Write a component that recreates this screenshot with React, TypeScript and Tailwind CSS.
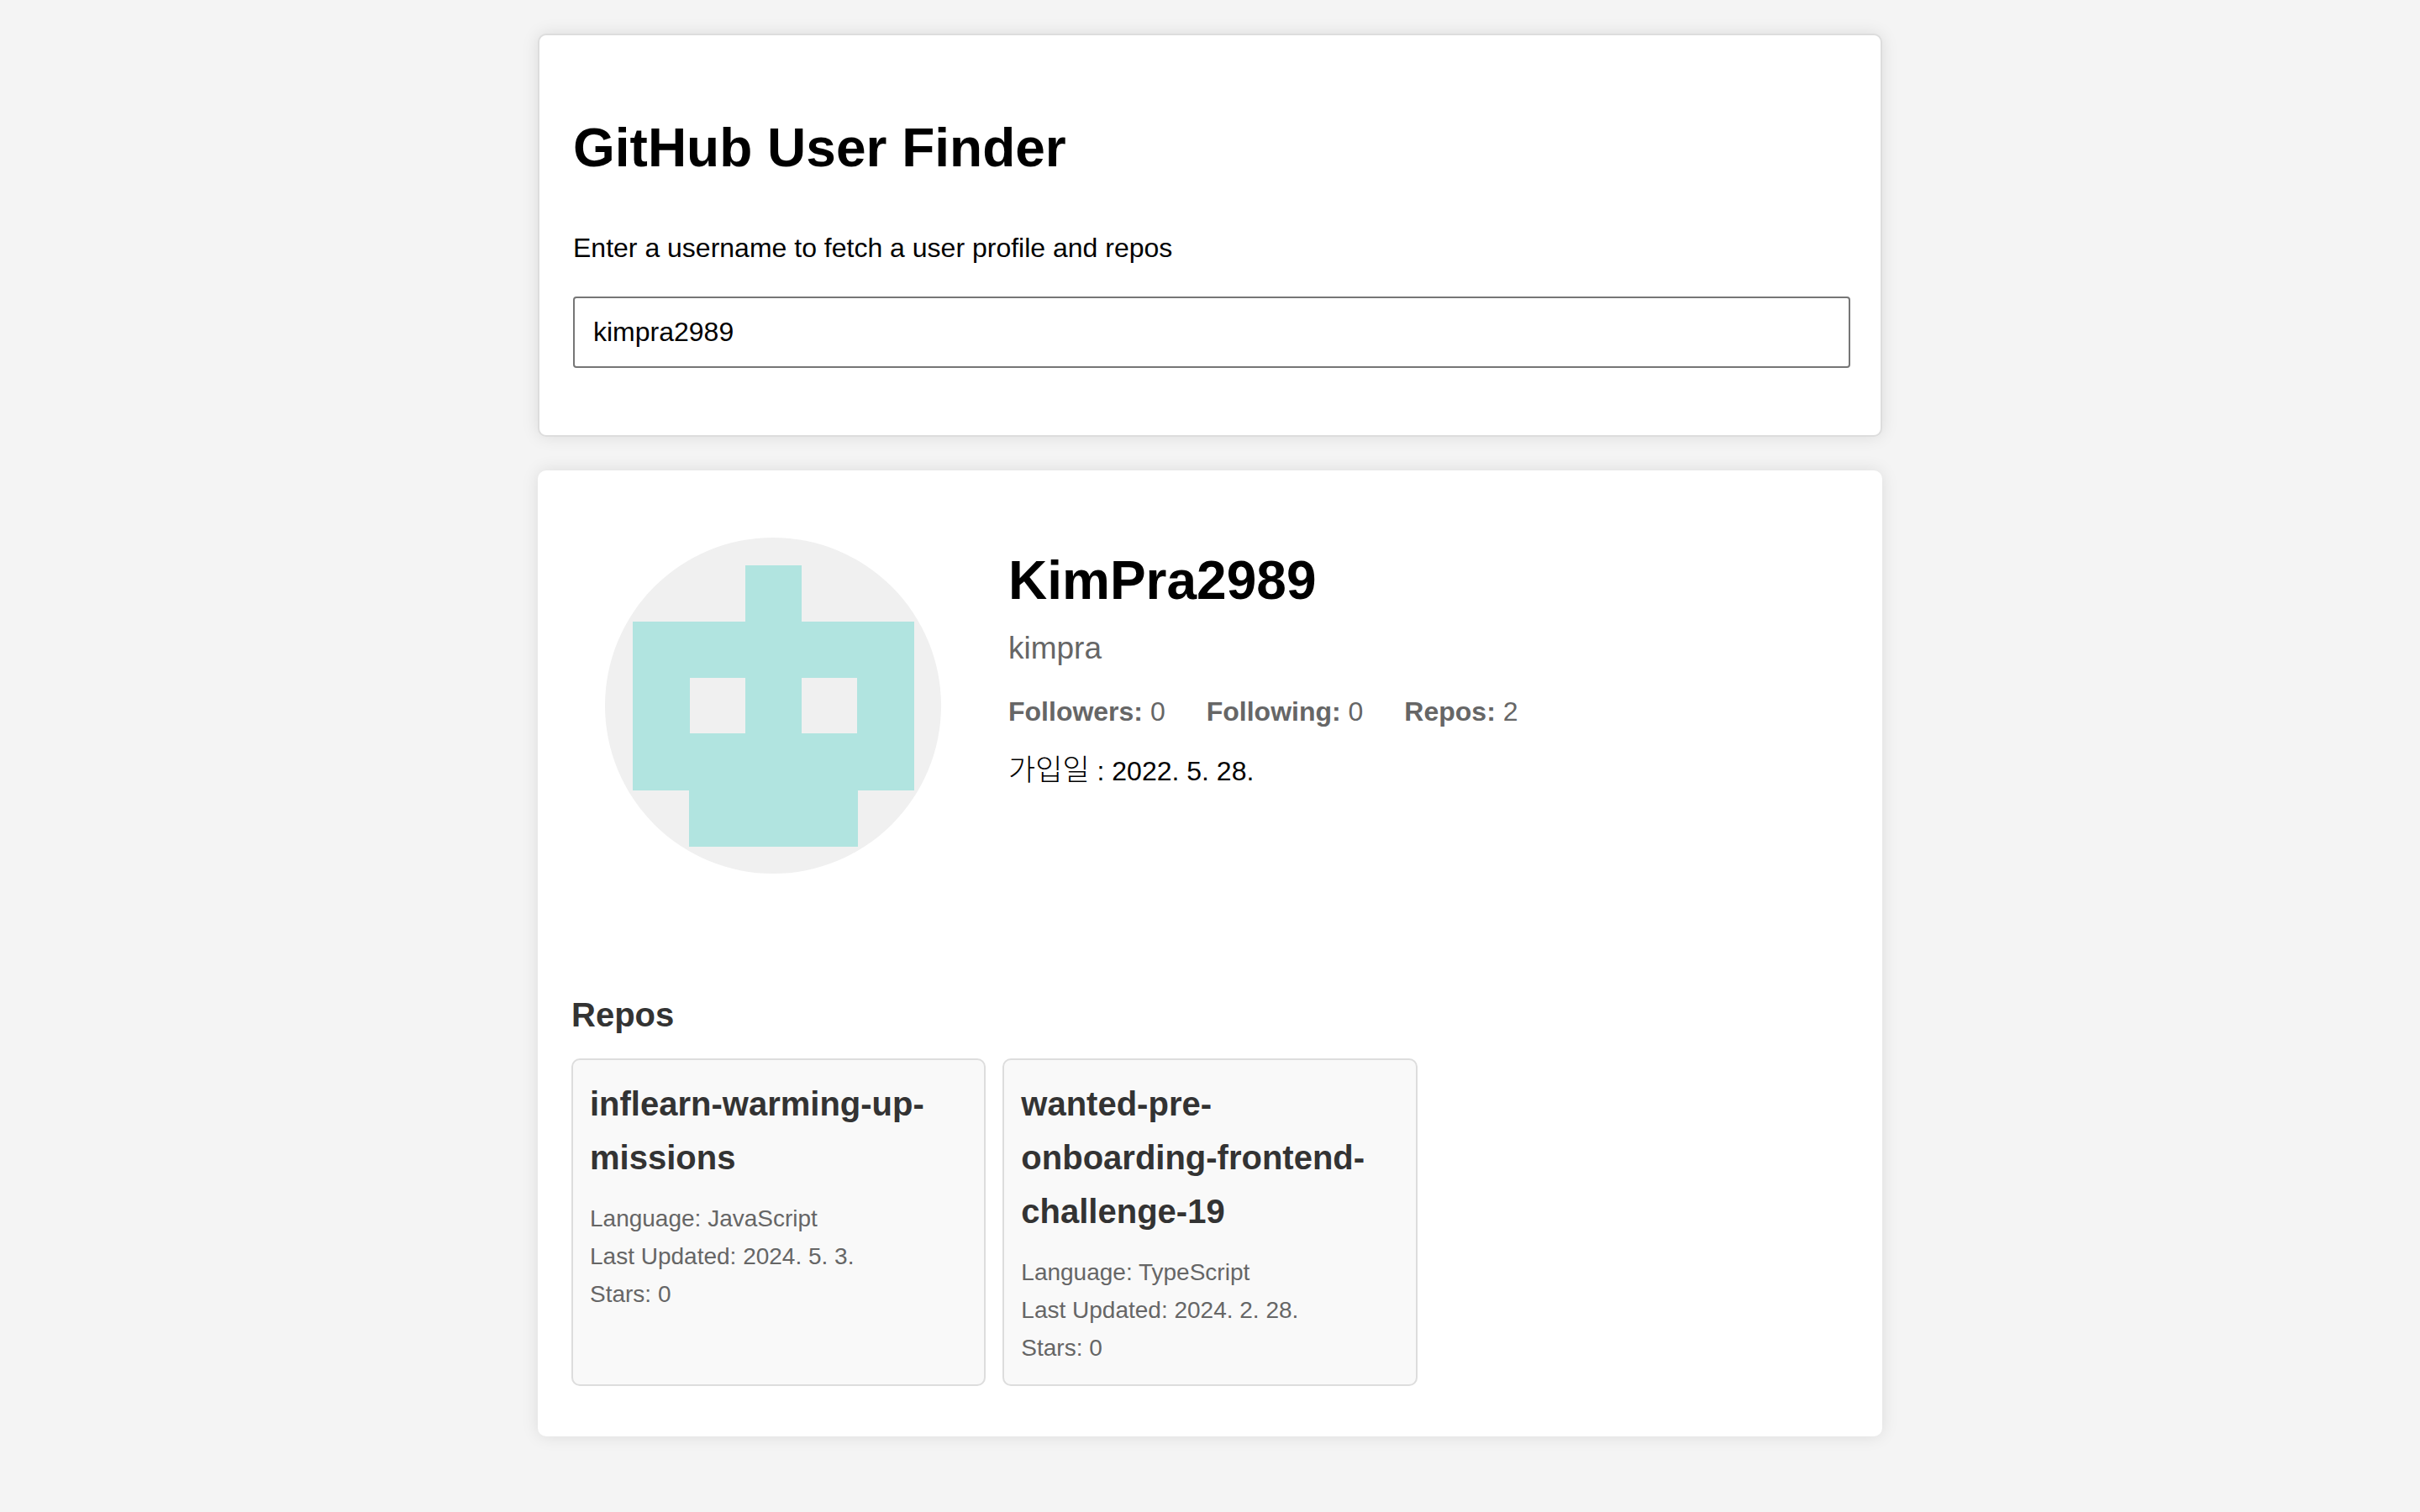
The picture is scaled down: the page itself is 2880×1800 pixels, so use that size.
import { useState } from "react";

type Repo = {
  name: string;
  language: string;
  updated: string;
  stars: number;
};

const stats = [
  { label: "Followers", value: 0 },
  { label: "Following", value: 0 },
  { label: "Repos", value: 2 },
];

const repos: Repo[] = [
  { name: "inflearn-warming-up-missions", language: "JavaScript", updated: "2024. 5. 3.", stars: 0 },
  { name: "wanted-pre-onboarding-frontend-challenge-19", language: "TypeScript", updated: "2024. 2. 28.", stars: 0 },
];

function Avatar() {
  return (
    <svg
      className="size-[400px] shrink-0 rounded-full bg-[#f0f0f0]"
      viewBox="0 0 400 400"
      role="img"
      aria-label="KimPra2989 avatar"
    >
      <path
        fill="#b1e4e0"
        fillRule="evenodd"
        d="M167 33h67v67h134v201h-67v67h-201v-67h-67v-201h134zM101 167v66h66v-66zM234 167v66h66v-66z"
      />
    </svg>
  );
}

function SearchCard() {
  const [username, setUsername] = useState("kimpra2989");
  return (
    <section className="rounded-[10px] border-2 border-[#dddddd] bg-white px-10 pt-[83px] pb-20 shadow-[0_0_20px_rgba(0,0,0,0.1)]">
      <h1 className="text-[64px] leading-[102px] font-bold">GitHub User Finder</h1>
      <label htmlFor="username" className="mt-[43px] block text-[32px] leading-[51px]">
        Enter a username to fetch a user profile and repos
      </label>
      <input
        id="username"
        type="text"
        value={username}
        onChange={(event) => setUsername(event.target.value)}
        className="mt-8 block h-[85px] w-[calc(100%+4px)] rounded-[4px] border-2 border-[#767676] bg-white px-[22px] text-[32px] outline-none"
      />
    </section>
  );
}

function Profile() {
  return (
    <div className="flex gap-20 p-10">
      <Avatar />
      <div>
        <h2 className="text-[64px] leading-[102px] font-bold">KimPra2989</h2>
        <p className="text-[37px] leading-[60px] text-[#666666]">kimpra</p>
        <ul className="mt-5 flex flex-wrap gap-[49px] text-[32px] leading-[51px] text-[#666666]">
          {stats.map((stat) => (
            <li key={stat.label}>
              <strong className="font-bold">{stat.label}:</strong> {stat.value}
            </li>
          ))}
        </ul>
        <p className="mt-5 text-[32px] leading-[51px]">
          <span className="text-[35px] leading-none font-light">가입일</span> : 2022. 5. 28.
        </p>
      </div>
    </div>
  );
}

function RepoCard({ repo }: { repo: Repo }) {
  return (
    <li className="rounded-[10px] border-2 border-[#dddddd] bg-[#f9f9f9] px-5 pt-5 pb-[21px]">
      <h3 className="text-[40px] leading-[64px] font-bold text-[#333333]">{repo.name}</h3>
      <div className="mt-[18px] text-[28px] leading-[45px] text-[#666666]">
        <p>Language: {repo.language}</p>
        <p>Last Updated: {repo.updated}</p>
        <p>Stars: {repo.stars}</p>
      </div>
    </li>
  );
}

export default function App() {
  return (
    <div className="min-h-screen bg-[#f4f4f4] py-10 font-['Liberation_Sans','Noto_Sans_CJK_KR',sans-serif] text-black">
      <main className="mx-auto flex w-full max-w-[1600px] flex-col gap-10">
        <SearchCard />
        <section className="rounded-[10px] bg-white px-10 pt-10 pb-[60px] shadow-[0_0_20px_rgba(0,0,0,0.1)]">
          <Profile />
          <h2 className="mt-24 text-[40px] leading-[64px] font-bold text-[#333333]">Repos</h2>
          <ul className="mt-5 grid grid-cols-3 gap-5">
            {repos.map((repo) => (
              <RepoCard key={repo.name} repo={repo} />
            ))}
          </ul>
        </section>
      </main>
    </div>
  );
}
